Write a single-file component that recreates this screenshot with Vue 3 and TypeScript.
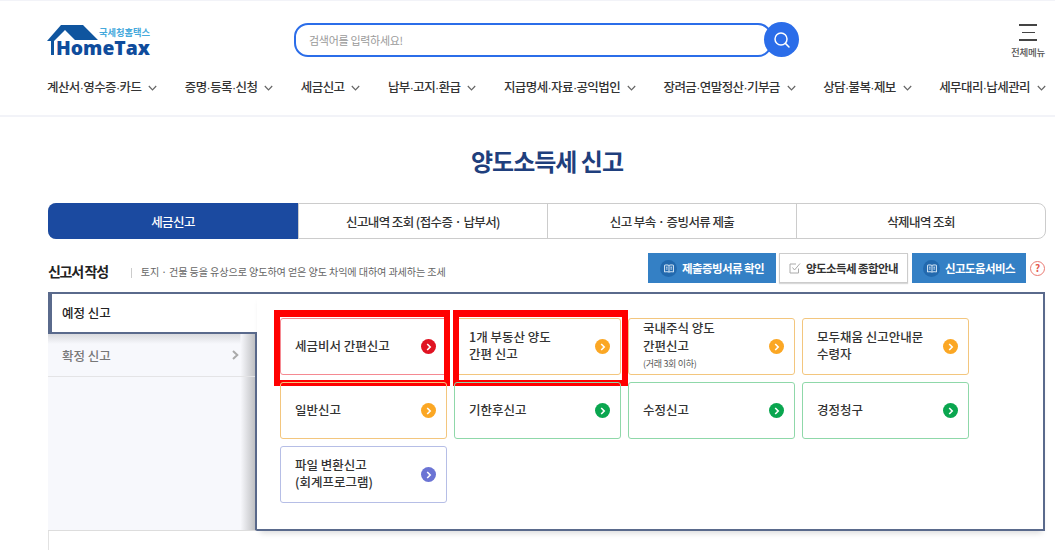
<script setup lang="ts">
interface Card {
  lines: string[]
  tone: 'red' | 'orange' | 'green' | 'purple'
  note?: string
  mark?: 'first' | 'second'
}

const navItems: string[] = [
  '계산서·영수증·카드',
  '증명·등록·신청',
  '세금신고',
  '납부·고지·환급',
  '지급명세·자료·공익법인',
  '장려금·연말정산·기부금',
  '상담·불복·제보',
  '세무대리·납세관리',
]

const tabs: string[] = ['세금신고', '신고내역 조회 (접수증 · 납부서)', '신고 부속 · 증빙서류 제출', '삭제내역 조회']

const cards: Card[] = [
  { lines: ['세금비서 간편신고'], tone: 'red', mark: 'first' },
  { lines: ['1개 부동산 양도', '간편 신고'], tone: 'orange', mark: 'second' },
  { lines: ['국내주식 양도', '간편신고'], tone: 'orange', note: '(거래 3회 이하)' },
  { lines: ['모두채움 신고안내문', '수령자'], tone: 'orange' },
  { lines: ['일반신고'], tone: 'orange' },
  { lines: ['기한후신고'], tone: 'green' },
  { lines: ['수정신고'], tone: 'green' },
  { lines: ['경정청구'], tone: 'green' },
  { lines: ['파일 변환신고', '(회계프로그램)'], tone: 'purple' },
]
</script>

<template>
  <div class="page">
    <header class="header">
      <div class="top">
        <svg class="logo" width="110" height="36" viewBox="0 0 110 36" aria-label="HomeTax">
          <path d="M0 17L14 1H36L51 16H28L18 6L7 17V31H4V17Z" fill="#0f559f" />
          <text x="52" y="12" class="logo-ko" textLength="51" lengthAdjust="spacingAndGlyphs">국세청홈택스</text>
          <text x="9" y="31" class="logo-en" textLength="94" lengthAdjust="spacingAndGlyphs">HomeTax</text>
        </svg>
        <div class="search">
          <div class="search-box">검색어를 입력하세요!</div>
          <div class="search-btn">
            <svg width="18" height="18" viewBox="0 0 18 18" fill="none" stroke="#fff" stroke-width="1.5">
              <circle cx="8" cy="8" r="6" />
              <path d="M12.4 12.4L16 16" stroke-linecap="round" />
            </svg>
          </div>
        </div>
        <div class="all-menu">
          <span class="bars"><i></i><i class="short"></i><i></i></span>
          <span class="all-label">전체메뉴</span>
        </div>
      </div>
      <nav class="nav">
        <span v-for="item in navItems" :key="item" class="nav-item">
          {{ item }}
          <svg width="9" height="6" viewBox="0 0 9 6" fill="none" stroke="#666" stroke-width="1.2">
            <path d="M.8 1L4.5 4.8L8.2 1" />
          </svg>
        </span>
      </nav>
    </header>

    <main class="content">
      <h1 class="title">양도소득세 신고</h1>

      <div class="tabs">
        <div v-for="(tab, i) in tabs" :key="tab" class="tab" :class="{ on: i === 0 }">{{ tab }}</div>
      </div>

      <div class="section">
        <h2 class="section-title">신고서 작성</h2>
        <p class="section-desc">토지 · 건물 등을 유상으로 양도하여 얻은 양도 차익에 대하여 과세하는 조세</p>
        <div class="actions">
          <span class="btn blue btn-a">
            <span class="book">
              <svg width="10" height="9" viewBox="0 0 10 9" fill="none" stroke="#dcebf8" stroke-width="1">
                <path d="M5 1.5C4 .8 2 .8 .6 1.2V8C2 7.6 4 7.6 5 8.2C6 7.6 8 7.6 9.4 8V1.2C8 .8 6 .8 5 1.5ZM5 1.5V8M2 3.2H3.6M2 5H3.6M6.4 3.2H8M6.4 5H8" />
              </svg>
            </span>
            제출증빙서류 확인
          </span>
          <span class="btn plain">
            <svg width="12" height="12" viewBox="0 0 12 12" fill="none" stroke="#aaa" stroke-width="1">
              <path d="M9.5 6.5V11H1V2H7" />
              <path d="M3.5 5.5L5.5 8L11 1.5" />
            </svg>
            양도소득세 종합안내
          </span>
          <span class="btn blue btn-c">
            <span class="book">
              <svg width="10" height="9" viewBox="0 0 10 9" fill="none" stroke="#dcebf8" stroke-width="1">
                <path d="M5 1.5C4 .8 2 .8 .6 1.2V8C2 7.6 4 7.6 5 8.2C6 7.6 8 7.6 9.4 8V1.2C8 .8 6 .8 5 1.5ZM5 1.5V8M2 3.2H3.6M2 5H3.6M6.4 3.2H8M6.4 5H8" />
              </svg>
            </span>
            신고도움서비스
          </span>
          <span class="help">?</span>
        </div>
      </div>

      <section class="board">
        <aside class="side">
          <div class="side-active">예정 신고</div>
          <div class="side-rest">
            <div class="side-item">
              확정 신고
              <svg width="7" height="10" viewBox="0 0 7 10" fill="none" stroke="#aaa" stroke-width="2">
                <path d="M1 1L5.3 5L1 9" />
              </svg>
            </div>
          </div>
        </aside>
        <div class="panel">
          <div class="grid">
            <div v-for="card in cards" :key="card.lines[0]" class="card" :class="[card.tone, { noted: card.note }]">
              <div class="card-text">
                <div v-for="line in card.lines" :key="line">{{ line }}</div>
                <div v-if="card.note" class="note">{{ card.note }}</div>
              </div>
              <span class="go">
                <svg width="6" height="8" viewBox="0 0 6 8" fill="none" stroke="#fff" stroke-width="1.6">
                  <path d="M1.2 1L4.2 4L1.2 7" />
                </svg>
              </span>
              <span v-if="card.mark" class="mark" :class="card.mark"></span>
            </div>
          </div>
        </div>
      </section>
      <div class="after"></div>
    </main>
  </div>
</template>

<style>
html,
body {
  margin: 0;
  overflow: hidden;
  background: #fff;
}
</style>

<style scoped>
.page {
  height: 550px;
  overflow: hidden;
  font-family: "Noto Sans CJK KR", "Noto Sans", sans-serif;
  color: #333;
}
.header {
  height: 114px;
  border-top: 1px solid #f2f3f8;
  border-bottom: 2px solid #f2f3f8;
  box-sizing: content-box;
}
.top {
  display: flex;
  align-items: flex-start;
  padding: 21px 9px 0 47px;
  height: 49px;
}
.logo {
  flex: none;
  margin-top: 2px;
  margin-right: 137px;
}
.logo-ko {
  font: 700 9.5px "Noto Sans CJK KR", sans-serif;
  fill: #45a9dc;
}
.logo-en {
  font: 800 20px "Open Sans", sans-serif;
  fill: #0f4c9c;
}
.search {
  display: flex;
  align-items: center;
  width: 505px;
}
.search-box {
  box-sizing: border-box;
  width: 478px;
  height: 34px;
  line-height: 30px;
  padding-left: 13px;
  border: 2px solid #2b6de9;
  border-radius: 14px;
  font-size: 11px;
  letter-spacing: -0.3px;
  color: #9a9a9a;
}
.search-btn {
  display: flex;
  align-items: center;
  justify-content: center;
  width: 35px;
  height: 35px;
  margin-left: -8px;
  border-radius: 50%;
  background: #2b6de9;
}
.all-menu {
  display: flex;
  flex-direction: column;
  align-items: center;
  margin-left: auto;
  width: 36px;
}
.bars {
  display: flex;
  flex-direction: column;
  align-items: center;
  gap: 6px;
  margin-top: 2px;
  width: 18px;
}
.bars i {
  display: block;
  width: 18px;
  height: 1.5px;
  background: #444;
}
.bars i.short {
  width: 13px;
}
.all-label {
  margin-top: 4px;
  font-size: 9.5px;
  font-weight: 500;
  line-height: 14px;
  letter-spacing: -0.3px;
  color: #555;
  white-space: nowrap;
}
.nav {
  display: flex;
  justify-content: space-between;
  padding: 8px 9px 0 47px;
}
.nav-item {
  display: flex;
  align-items: center;
  gap: 7px;
  font-family: "Liberation Sans", "Noto Sans CJK KR", sans-serif;
  font-size: 12.5px;
  font-weight: 500;
  line-height: 18px;
  letter-spacing: -0.6px;
  color: #333;
  white-space: nowrap;
}
.content {
  padding: 0 9px 0 48px;
}
.title {
  margin: 26px 0 0;
  height: 41px;
  text-align: center;
  font-size: 24px;
  line-height: 36px;
  font-weight: 700;
  letter-spacing: -1px;
  color: #1f3f7d;
}
.tabs {
  display: grid;
  grid-template-columns: repeat(4, 1fr);
  height: 36px;
  box-sizing: border-box;
  margin-top: 19px;
  border: 1px solid #ccc;
  border-radius: 8px;
}
.tab {
  display: flex;
  align-items: center;
  justify-content: center;
  font-size: 12.5px;
  font-weight: 500;
  letter-spacing: -0.6px;
  color: #333;
  border-left: 1px solid #ccc;
}
.tab:first-child {
  border-left: 0;
}
.tab.on {
  margin: -1px 0 -1px -1px;
  border-radius: 8px 0 0 8px;
  background: #1b4aa0;
  color: #fff;
}
.section {
  display: flex;
  align-items: center;
  height: 30px;
  margin-top: 14px;
}
.section-title {
  margin: 5px 0 0;
  font-size: 14px;
  font-weight: 700;
  line-height: 30px;
  letter-spacing: -1.3px;
  color: #222;
  white-space: nowrap;
}
.section-desc {
  position: relative;
  margin: 6px 0 0 23px;
  padding-left: 10px;
  font-size: 10.1px;
  letter-spacing: -0.1px;
  color: #666;
  white-space: nowrap;
}
.section-desc::before {
  content: "";
  position: absolute;
  left: 0;
  top: 4px;
  width: 1px;
  height: 10px;
  background: #ccc;
}
.actions {
  display: flex;
  align-items: center;
  margin-left: auto;
  margin-right: 1px;
}
.btn {
  display: flex;
  align-items: center;
  justify-content: center;
  gap: 5px;
  box-sizing: border-box;
  height: 30px;
  font-size: 11.5px;
  font-weight: 700;
  letter-spacing: -0.6px;
  white-space: nowrap;
}
.btn.blue {
  background: #3480c5;
  color: #fff;
}
.btn-a {
  width: 128px;
}
.btn-c {
  width: 114px;
  margin-left: 4px;
}
.btn.plain {
  width: 129px;
  margin-left: 3px;
  background: #fff;
  border: 1px solid #ccc;
  box-shadow: 0 1px 1px rgba(0, 0, 0, 0.15);
  color: #333;
}
.book {
  display: flex;
  align-items: center;
  justify-content: center;
  width: 17px;
  height: 17px;
  border-radius: 50%;
  background: #2269ae;
}
.help {
  box-sizing: border-box;
  width: 15px;
  height: 15px;
  margin-left: 4px;
  border: 1.3px solid #ea7a72;
  border-radius: 50%;
  font-size: 10px;
  font-weight: 700;
  line-height: 12px;
  text-align: center;
  color: #e4574d;
}
.board {
  display: flex;
  height: 239px;
  box-sizing: border-box;
  margin: 9px 1px 0 0;
  border-top: 2px solid #5a6a8c;
}
.side {
  display: flex;
  flex-direction: column;
  flex: none;
  width: 209px;
}
.side-active {
  box-sizing: border-box;
  height: 40px;
  padding-left: 10px;
  border-left: 4px solid #5a6a8c;
  border-bottom: 2px solid #5a6a8c;
  font-size: 12.5px;
  font-weight: 500;
  line-height: 37px;
  color: #222;
}
.side-rest {
  flex: 1;
  border-right: 2px solid #5a6a8c;
  border-bottom: 1px solid #ddd;
  background: linear-gradient(to right, #f7f8fc 0, #f7f8fc 93%, #bfc0c3 100%);
}
.side-item {
  display: flex;
  align-items: center;
  justify-content: space-between;
  height: 43px;
  box-sizing: border-box;
  padding: 0 16px 0 14px;
  border-bottom: 1px solid #e4e4e6;
  font-size: 12.5px;
  font-weight: 500;
  color: #777;
  background: linear-gradient(to bottom, #d9dade 0, #f7f8fc 10px) no-repeat left top / 93% 100%;
}
.panel {
  flex: 1;
  box-sizing: border-box;
  padding: 24px 0 0 23px;
  border-right: 2px solid #5a6a8c;
  border-bottom: 2px solid #5a6a8c;
  box-shadow: 0 5px 6px -3px rgba(0, 0, 0, 0.15);
}
.grid {
  display: grid;
  grid-template-columns: repeat(4, 167px);
  grid-auto-rows: 57px;
  gap: 7px;
}
.card {
  position: relative;
  display: flex;
  align-items: center;
  justify-content: space-between;
  box-sizing: border-box;
  padding: 0 10px 0 14px;
  border: 1px solid;
  border-radius: 3px;
  font-size: 12.5px;
  font-weight: 500;
  line-height: 17px;
  color: #333;
}
.card-text {
  margin-top: -3px;
  white-space: nowrap;
}
.noted .card-text {
  margin-top: -4px;
  line-height: 18px;
}
.note {
  margin-top: 3px;
  font-size: 9px;
  font-weight: 400;
  line-height: 12px;
  letter-spacing: -0.3px;
  color: #555;
}
.go {
  display: flex;
  align-items: center;
  justify-content: center;
  flex: none;
  width: 15px;
  height: 15px;
  border-radius: 50%;
}
.red { border-color: #f58a92; }
.red .go { background: #e01322; }
.orange { border-color: #f3c67e; }
.orange .go { background: #fba724; }
.green { border-color: #8fd8a9; }
.green .go { background: #0aa64f; }
.purple { border-color: #b6bee6; }
.purple .go { background: #6b74d4; }
.mark {
  position: absolute;
  top: -9px;
  bottom: -12px;
  box-sizing: border-box;
  border: 6px solid #f00;
  border-top-width: 7px;
  pointer-events: none;
}
.mark.first {
  left: -7px;
  right: -4px;
}
.mark.second {
  left: -2px;
  right: -8px;
}
.after {
  height: 30px;
  border-left: 1px solid #e2e2e2;
}
</style>
